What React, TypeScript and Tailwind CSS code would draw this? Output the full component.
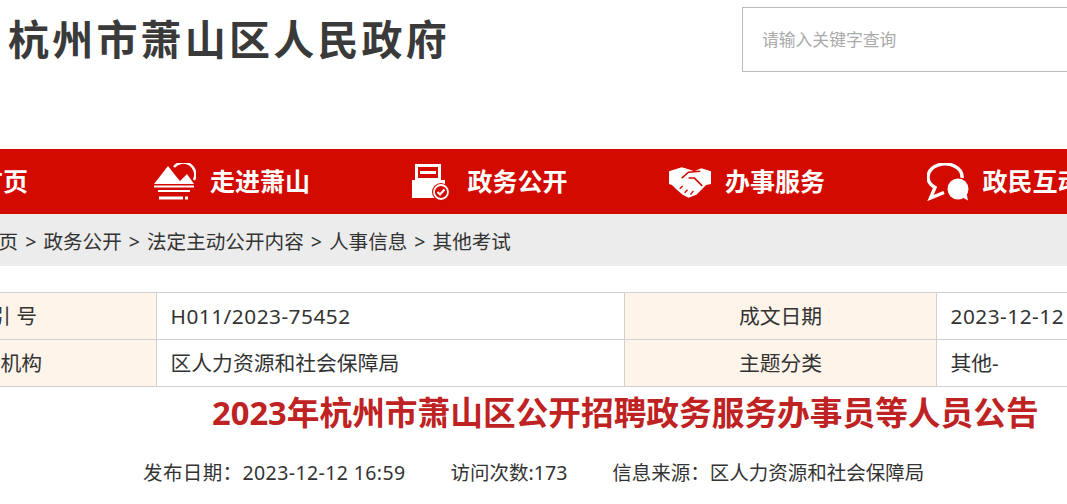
const cjk = '"Noto Sans","Noto Sans CJK SC",sans-serif';

// nav icons, drawn by hand since the packages have nothing close
function MountainIcon() {
  return (
    <svg width="42" height="38" viewBox="0 0 42 38" fill="none" className="shrink-0">
      <path d="M0 21 L14 3 L21 12 L26 18 L33 11 L40 21 Z" fill="#fff" />
      <path d="M20 4 A12 12 0 0 1 40 17" stroke="#fff" strokeWidth="2.5" />
      <path d="M0 23.5 H40 M4 28 H36" stroke="#fff" strokeWidth="2" />
      <path d="M5 35 H29" stroke="#fff" strokeWidth="3" />
      <path d="M31 35 H34" stroke="#fff" strokeWidth="3" />
    </svg>
  );
}

function DocIcon() {
  return (
    <svg width="42" height="38" viewBox="0 0 42 38" fill="none" className="shrink-0">
      <path d="M3 1 H29 V18 H3 Z" fill="#fff" />
      <path d="M6 4 H26 V15 H6 Z" fill="#d20a00" />
      <path d="M8 9.5 H24" stroke="#fff" strokeWidth="3" />
      <path d="M0 17 H33 V35 H0 Z" fill="#fff" />
      <circle cx="29" cy="29" r="9" fill="#d20a00" />
      <circle cx="29" cy="29" r="7" fill="#d20a00" stroke="#fff" strokeWidth="1.8" />
      <path d="M25.5 29 L28 31.5 L32.5 26.5" stroke="#fff" strokeWidth="2.2" />
    </svg>
  );
}

function HandshakeIcon() {
  return (
    <svg width="42" height="38" viewBox="0 0 43 38" fill="none" className="shrink-0">
      <path
        d="M0 8 L13 4 L20 6 L26 8 L33 5 L43 8 V21 L38 22 L28 32 L20 35 L14 32 L8 27 L3 22 L0 21 Z"
        fill="#fff"
      />
      <path d="M13 15 L20 9 L32 8 M20 15 L26 15 L34 23" stroke="#d20a00" strokeWidth="1.6" />
      <path d="M11 26 L14 23 M16 30 L19 27 M22 32 L25 28" stroke="#d20a00" strokeWidth="1.4" />
    </svg>
  );
}

function ChatIcon() {
  return (
    <svg width="42" height="38" viewBox="0 0 42 38" fill="none" className="shrink-0">
      <path d="M35 15 A17 13 0 1 0 8 24.5 L3.5 35 L17 29.5" stroke="#fff" strokeWidth="3.4" />
      <circle cx="31" cy="26" r="10.5" fill="#fff" />
      <path d="M33 33 L41 37.5 L39 27 Z" fill="#fff" />
    </svg>
  );
}

const navItems = [
  { label: '走进萧山', icon: <MountainIcon /> },
  { label: '政务公开', icon: <DocIcon /> },
  { label: '办事服务', icon: <HandshakeIcon /> },
  { label: '政民互动', icon: <ChatIcon /> },
];

const crumbs = ['首页', '政务公开', '法定主动公开内容', '人事信息', '其他考试'];

const labelCell = 'w-[312px] h-[47px] border border-[#d0d0d0] bg-[#fef4e9] pt-[2px] text-center font-normal';
const valueCell = 'h-[47px] border border-[#d0d0d0] pl-[13.5px] pt-[2px] text-left';

export default function App() {
  return (
    <div className="w-[1067px] h-[504px] overflow-hidden bg-white text-[#333]" style={{ fontFamily: cjk }}>
      <div className="w-[1405px] -ml-[156px]">
        {/* header */}
        <div className="h-[149px] flex items-start">
          <h1 className="ml-[164px] mt-[12px] text-[41px] leading-[54px] font-bold tracking-[3.2px] text-[#3a3a3a] whitespace-nowrap">
            杭州市萧山区人民政府
          </h1>
          <input
            placeholder="请输入关键字查询"
            className="ml-auto mr-[60px] mt-[7px] w-[447px] h-[65px] border border-[#bbb] pl-[19px] text-[16.8px] placeholder:text-[#aaa] outline-none"
          />
        </div>

        {/* nav */}
        <div className="h-[65px] bg-[#d20a00] flex items-center pl-[52px] text-white">
          <div className="w-[258px] shrink-0 pl-[82px] text-[25px] font-bold">首页</div>
          {navItems.map((item) => (
            <div key={item.label} className="w-[257.5px] shrink-0 flex items-center gap-[14px]">
              {item.icon}
              <span className="text-[25px] font-bold whitespace-nowrap">{item.label}</span>
            </div>
          ))}
        </div>

        {/* breadcrumb */}
        <div className="h-[52px] bg-[#ececec] flex items-center pl-[135px] pt-[3px] text-[19.6px] gap-[7px] whitespace-nowrap">
          {crumbs.map((c, i) => (
            <span key={c} className="flex items-center gap-[7px]">
              {i > 0 && <span>&gt;</span>}
              {c}
            </span>
          ))}
        </div>

        {/* info table */}
        <table className="mt-[26px] w-[1405px] table-fixed border-collapse text-[20.8px]">
          <tbody>
            <tr>
              <th className={labelCell}>索 引 号</th>
              <td className={`${valueCell} w-[468px] tracking-[0.5px]`}>H011/2023-75452</td>
              <th className={labelCell}>成文日期</th>
              <td className={`${valueCell} tracking-[0.5px]`}>2023-12-12</td>
            </tr>
            <tr>
              <th className={labelCell}>发布机构</th>
              <td className={valueCell}>区人力资源和社会保障局</td>
              <th className={labelCell}>主题分类</th>
              <td className={valueCell}>其他-</td>
            </tr>
          </tbody>
        </table>

        {/* article title */}
        <h2 className="ml-[368px] mt-[2px] text-[32.7px] leading-[48px] font-bold text-[#bf2222] whitespace-nowrap">
          2023年杭州市萧山区公开招聘政务服务办事员等人员公告
        </h2>

        {/* meta */}
        <div className="ml-[299px] mt-[22px] flex text-[19.5px] leading-[28px] whitespace-nowrap">
          <span className="tracking-[0.4px]">发布日期：2023-12-12 16:59</span>
          <span className="ml-[45px]">访问次数:173</span>
          <span className="ml-[45px]">信息来源：区人力资源和社会保障局</span>
        </div>
      </div>
    </div>
  );
}
